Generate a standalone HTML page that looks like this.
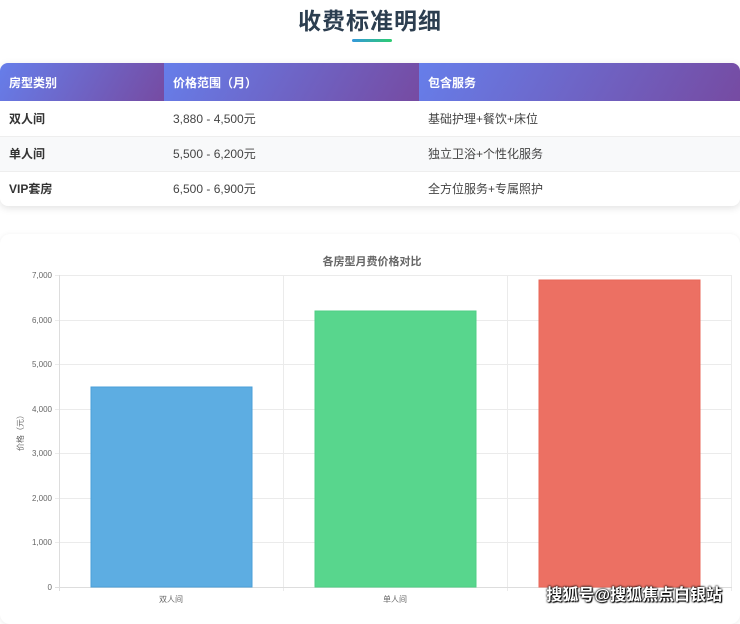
<!DOCTYPE html>
<html><head><meta charset="utf-8"><style>
*{margin:0;padding:0;box-sizing:border-box}
body{width:740px;height:612px;background:#fff;font-family:"Liberation Sans","Noto Sans CJK SC",sans-serif;position:relative;overflow:hidden}
h1{position:absolute;top:2px;left:0;width:740px;text-align:center;font-size:23px;color:#2c3e50;font-weight:bold;letter-spacing:1px}
.ul{position:absolute;left:352px;top:39px;width:40px;height:3px;border-radius:2px;background:linear-gradient(90deg,#3498db,#2ecc71)}
.card{position:absolute;left:0;top:63px;width:740px;height:143px;border-radius:8px;overflow:hidden;box-shadow:0 2px 8px rgba(0,0,0,.12)}
table{border-collapse:collapse;width:740px;font-size:12px;color:#444}
th{height:38px;text-align:left;padding-left:9px;color:#fff;font-weight:bold;background:linear-gradient(120deg,#667eea,#764ba2)}
td{height:35px;padding-left:9px;border-bottom:1px solid #eee}
td:first-child{font-weight:bold;color:#333}
tr.alt td{background:#f8f9fa}
.chart{position:absolute;left:0;top:234px;width:740px;height:390px;border-radius:10px;box-shadow:0 1px 6px rgba(0,0,0,.08);background:#fff}
.wm{position:absolute;right:18px;bottom:7px;font-size:16px;font-weight:bold;color:#fff;text-shadow:0 0 2px #000,0 0 2px #000,1px 1px 1px #000}
</style></head><body>
<h1>收费标准明细</h1><div class="ul"></div>
<div class="card"><table>
<tr><th style="width:164px">房型类别</th><th style="width:255px">价格范围（月）</th><th>包含服务</th></tr>
<tr><td>双人间</td><td>3,880 - 4,500元</td><td>基础护理+餐饮+床位</td></tr>
<tr class="alt"><td>单人间</td><td>5,500 - 6,200元</td><td>独立卫浴+个性化服务</td></tr>
<tr><td style="border:none">VIP套房</td><td style="border:none">6,500 - 6,900元</td><td style="border:none">全方位服务+专属照护</td></tr>
</table></div>
<div class="chart"></div>
<svg style="position:absolute;left:0;top:0" width="740" height="612" font-family="Liberation Sans,Noto Sans CJK SC,sans-serif">
<text x="372" y="265" text-anchor="middle" font-size="11" font-weight="bold" fill="#666">各房型月费价格对比</text>
<g stroke="#ebebeb" stroke-width="1">
<line x1="55" y1="275.5" x2="732" y2="275.5"/><line x1="55" y1="320.5" x2="732" y2="320.5"/><line x1="55" y1="364.5" x2="732" y2="364.5"/><line x1="55" y1="409.5" x2="732" y2="409.5"/><line x1="55" y1="453.5" x2="732" y2="453.5"/><line x1="55" y1="498.5" x2="732" y2="498.5"/><line x1="55" y1="542.5" x2="732" y2="542.5"/>
<line x1="283.5" y1="275" x2="283.5" y2="591"/><line x1="507.5" y1="275" x2="507.5" y2="591"/><line x1="731.5" y1="275" x2="731.5" y2="591"/>
</g>
<line x1="59.5" y1="275" x2="59.5" y2="591" stroke="#ddd"/>
<line x1="55" y1="587.5" x2="732" y2="587.5" stroke="#ddd"/>
<g font-size="8" fill="#666" text-anchor="end">
<text x="52" y="278">7,000</text><text x="52" y="323">6,000</text><text x="52" y="367">5,000</text><text x="52" y="412">4,000</text><text x="52" y="456">3,000</text><text x="52" y="501">2,000</text><text x="52" y="545">1,000</text><text x="52" y="590">0</text>
</g>
<text transform="translate(23 431) rotate(-90)" text-anchor="middle" font-size="8" fill="#666">价格（元）</text>
<rect x="91" y="387" width="161" height="200" fill="#5dade2" stroke="#4a9fd8"/>
<rect x="315" y="311" width="161" height="276" fill="#58d68d" stroke="#4fcf85"/>
<rect x="539" y="280" width="161" height="307" fill="#ec7063" stroke="#e8675a"/>
<g font-size="8" fill="#666" text-anchor="middle">
<text x="171" y="602">双人间</text><text x="395" y="602">单人间</text>
</g>
</svg>
<div class="wm">搜狐号@搜狐焦点白银站</div>
</body></html>
